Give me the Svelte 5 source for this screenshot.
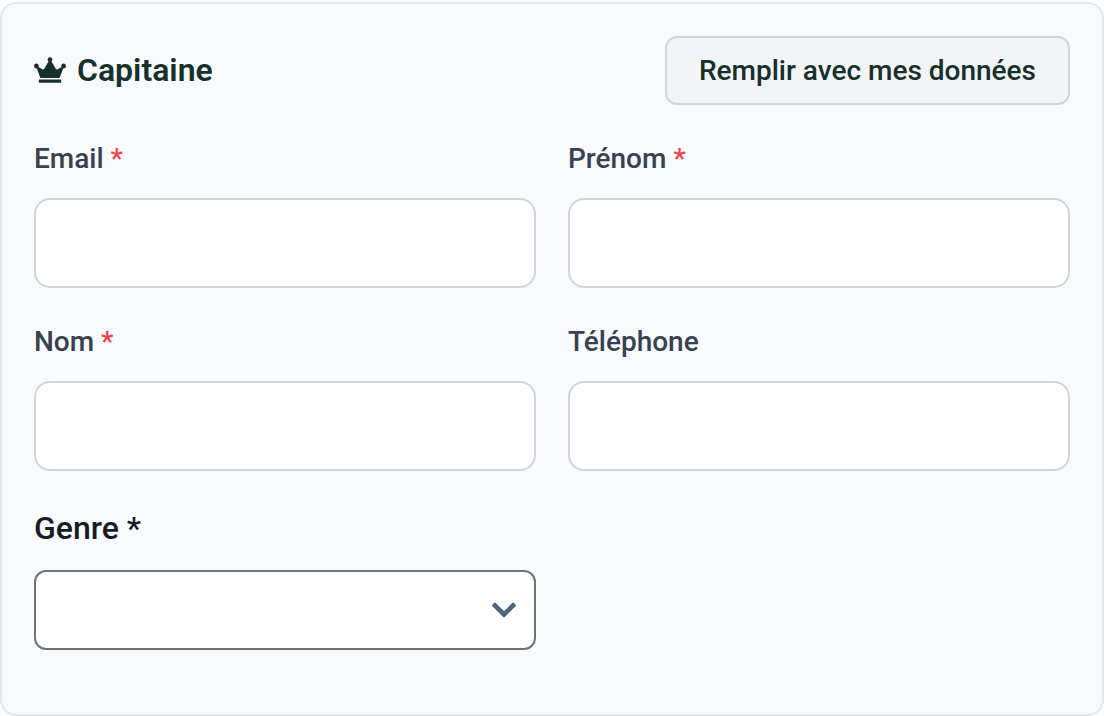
<script>
  let form = $state({ email: '', firstName: '', lastName: '', phone: '', gender: '' });

  const fields = [
    { key: 'email', label: 'Email', type: 'email', required: true },
    { key: 'firstName', label: 'Prénom', type: 'text', required: true },
    { key: 'lastName', label: 'Nom', type: 'text', required: true },
    { key: 'phone', label: 'Téléphone', type: 'tel', required: false }
  ];
</script>

<section class="card">
  <header>
    <h2>
      <svg class="crown" viewBox="0 0 640 512" aria-hidden="true">
        <path d="M528 448H112c-8.800 0-16 7.200-16 16v32c0 8.800 7.200 16 16 16h416c8.800 0 16-7.200 16-16v-32c0-8.800-7.200-16-16-16zm64-320c-26.500 0-48 21.500-48 48 0 7.100 1.600 13.700 4.400 19.800L476 239.200c-15.400 9.200-35.300 4-44.200-11.600L350.300 85C361 76.200 368 63 368 48c0-26.500-21.500-48-48-48s-48 21.500-48 48c0 15 7 28.200 17.700 37l-81.500 142.600c-8.900 15.600-28.900 20.800-44.200 11.600l-72.300-43.400c2.700-6 4.400-12.700 4.400-19.800 0-26.500-21.500-48-48-48S0 149.500 0 176s21.500 48 48 48c2.600 0 5.200-.4 7.700-.8L128 416h384l72.300-192.800c2.500.4 5.100.8 7.700.8 26.500 0 48-21.500 48-48s-21.500-48-48-48z" />
      </svg>
      Capitaine
    </h2>
    <button type="button">Remplir avec mes données</button>
  </header>

  <div class="grid">
    {#each fields as field (field.key)}
      <div class="field">
        <label for={field.key}>
          {field.label}
          {#if field.required}<span class="required">*</span>{/if}
        </label>
        <input id={field.key} type={field.type} bind:value={form[field.key]} />
      </div>
    {/each}

    <div class="field gender">
      <label for="gender">Genre *</label>
      <div class="select">
        <select id="gender" bind:value={form.gender}>
          <option value=""></option>
          <option value="f">Femme</option>
          <option value="m">Homme</option>
        </select>
        <svg class="chevron" viewBox="0 0 24 16" aria-hidden="true">
          <path d="M10.900 14.700.5 4.300a1.300 1.300 0 0 1 0-1.800L2 1a1.300 1.300 0 0 1 1.800 0L12 9.200 20.200 1A1.300 1.300 0 0 1 22 1l1.500 1.500a1.300 1.300 0 0 1 0 1.800L13.100 14.700a1.500 1.500 0 0 1-2.200 0z" />
        </svg>
      </div>
    </div>
  </div>
</section>

<style>
  :global(body) {
    background: #fff;
  }

  .card {
    box-sizing: border-box;
    height: 714px;
    margin-top: 2px;
    padding: 32px;
    border: 2px solid #e2e8f0;
    border-radius: 16px;
    background: #f9fafc;
    font-family: Roboto, sans-serif;
  }

  header {
    display: flex;
    align-items: center;
    justify-content: space-between;
    height: 69px;
    margin-bottom: 32px;
  }

  h2 {
    display: flex;
    align-items: center;
    gap: 11px;
    margin: 0;
    padding-bottom: 1px;
    font-size: 32px;
    font-weight: 600;
    line-height: 48px;
    color: #16302b;
  }

  .crown {
    width: 32px;
    height: 26px;
    fill: currentColor;
  }

  button {
    box-sizing: border-box;
    height: 69px;
    padding: 0 32px;
    border: 2px solid #d1d5db;
    border-radius: 12px;
    background: #f3f4f6;
    font: 500 28px/40px Roboto, sans-serif;
    color: #16302b;
  }

  .grid {
    display: grid;
    grid-template-columns: 1fr 1fr;
    gap: 32px;
  }

  .field {
    height: 151px;
  }

  label {
    display: block;
    margin-bottom: 17px;
    font-size: 28px;
    font-weight: 500;
    line-height: 44px;
    color: #374151;
  }

  .required {
    color: #ef4444;
  }

  input,
  select {
    box-sizing: border-box;
    display: block;
    width: 100%;
    padding: 0 24px;
    outline: none;
    background: #fff;
    font: 400 32px Roboto, sans-serif;
    color: #16302b;
  }

  input {
    height: 90px;
    border: 2px solid #d1d5db;
    border-radius: 16px;
  }

  .gender label {
    margin-bottom: 18px;
    padding-top: 1px;
    font-size: 32px;
    line-height: 48px;
    color: #161d22;
  }

  .select {
    position: relative;
  }

  select {
    height: 80px;
    border: 2px solid #6b7575;
    border-radius: 12px;
    appearance: none;
  }

  .chevron {
    position: absolute;
    top: 32px;
    right: 20px;
    width: 24px;
    height: 16px;
    fill: #4a6580;
    pointer-events: none;
  }
</style>
